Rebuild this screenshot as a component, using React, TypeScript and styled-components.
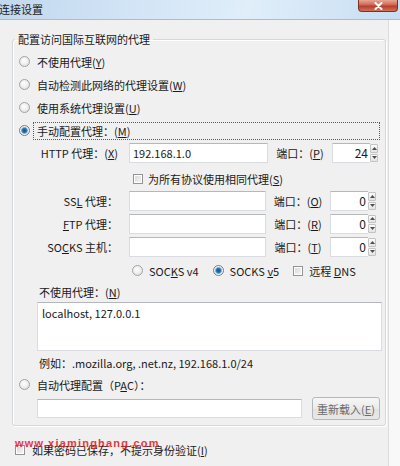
import React from "react";
import styled, { createGlobalStyle, css } from "styled-components";

const GlobalStyle = createGlobalStyle`
  html, body { margin: 0; padding: 0; background: #f0f0f0; }
  body {
    font-family: "Noto Sans CJK SC", "Noto Sans", sans-serif;
    font-size: 11px;
    color: #1a1a1a;
  }
  * { box-sizing: border-box; }
`;

const Window = styled.div`
  width: 400px;
  height: 466px;
  display: flex;
  flex-direction: column;
  overflow: hidden;
  background: #f0f0f0;
`;

const TitleBar = styled.div`
  height: 20px;
  flex: none;
  display: flex;
  align-items: flex-start;
  justify-content: space-between;
  background: linear-gradient(100deg, #c2d8ee 0%, #d3e5f6 35%, #e0eefa 62%, #c8ddf2 100%);
  border-bottom: 1px solid #aabdd0;
`;

const Title = styled.div`
  font-size: 11px;
  line-height: 19px;
  margin-left: -1px;
  color: #1b1b1b;
`;

const CloseButton = styled.div`
  width: 40px;
  height: 12px;
  margin-right: 2px;
  border: 1px solid #7a3226;
  border-top: none;
  border-radius: 0 0 4px 4px;
  background: linear-gradient(#e8a596, #cf6652 45%, #b63e2a 55%, #d0735a);
  display: flex;
  align-items: center;
  justify-content: center;
`;

const Body = styled.div`
  flex: 1;
  display: flex;
`;

const Content = styled.div`
  width: 388px;
  padding: 12px 0 0 12px;
  display: flex;
  flex-direction: column;
`;

const Frame = styled.div`
  flex: 1;
  background: #f8f8f8;
  border-left: 1px solid #dcdcdc;
`;

const Group = styled.fieldset`
  margin: 0;
  padding: 0 0 5px 6px;
  width: 374px;
  min-width: 0;
  border: 1px solid #d2d8dc;
  border-radius: 3px;
  box-shadow: 1px 1px 0 #ffffff, inset 1px 1px 0 #ffffff;
  display: flex;
  flex-direction: column;
`;

const Legend = styled.legend`
  padding: 0 3px;
  margin-left: -4px;
  line-height: 14px;
  font-size: 11px;
`;

const U = styled.span`
  text-decoration: underline;
  text-underline-offset: 1px;
`;

const Row = styled.div<{ $h: number; $indent?: number; $gap?: number; $pt?: number }>`
  display: flex;
  align-items: center;
  height: ${(p) => p.$h}px;
  padding-left: ${(p) => p.$indent ?? 0}px;
  padding-top: ${(p) => p.$pt ?? 0}px;
  gap: ${(p) => p.$gap ?? 0}px;
  white-space: nowrap;
`;

const OptionList = styled.div`
  padding-top: 4px;
  display: flex;
  flex-direction: column;
`;

const Radio = styled.span<{ $checked?: boolean }>`
  flex: none;
  width: 11px;
  height: 11px;
  border-radius: 50%;
  border: 1px solid #a3a3a3;
  background: radial-gradient(circle at 45% 40%, #ffffff 0%, #ececec 55%, #d2d2d2 100%);
  ${(p) =>
    p.$checked &&
    css`
      border-color: #6f7f8c;
      background: radial-gradient(circle at 50% 50%, #1a4f78 0, #2c7bb4 2.2px, #86bde6 3.2px, #f4f7f9 3.8px, #dcdcdc 100%);
    `}
`;

const OptionText = styled.span<{ $focused?: boolean }>`
  padding-left: 4px;
  line-height: 16px;
  ${(p) =>
    p.$focused &&
    css`
      flex: 1;
      margin-right: 5px;
      padding-left: 3px;
      border: 1px dotted #5a5a5a;
      line-height: 16px;
    `}
`;

const FieldLabel = styled.span`
  width: 99px;
  text-align: right;
  flex: none;
`;

const Input = styled.div<{ $w: number; $h?: number }>`
  flex: none;
  width: ${(p) => p.$w}px;
  height: ${(p) => p.$h ?? 20}px;
  background: #ffffff;
  border: 1px solid #d9dde1;
  border-top-color: #b4b8bd;
  padding: 0 3px;
  display: flex;
  align-items: center;
  line-height: 14px;
`;

const TextArea = styled(Input)`
  align-items: flex-start;
  padding: 3px 4px;
  margin-left: 18px;
`;

const PortLabel = styled.span`
  width: 64px;
  flex: none;
  text-align: center;
`;

const PortWrap = styled.div`
  display: flex;
  align-items: center;
  height: 20px;
`;

const PortBox = styled.div`
  width: 38px;
  height: 20px;
  background: #ffffff;
  border: 1px solid #d9dde1;
  border-top-color: #b4b8bd;
  border-right: none;
  text-align: right;
  padding-right: 2px;
  line-height: 18px;
  font-size: 12px;
`;

const Spinner = styled.div`
  width: 8px;
  height: 18px;
  display: flex;
  flex-direction: column;
  gap: 1px;
`;

const SpinBtn = styled.div`
  flex: 1;
  border: 1px solid #c3c3c3;
  border-radius: 1px;
  background: linear-gradient(#fbfbfb, #e3e3e3);
  display: flex;
  align-items: center;
  justify-content: center;
`;

const Check = styled.span`
  flex: none;
  width: 10px;
  height: 10px;
  border: 1px solid #949494;
  background: linear-gradient(135deg, #d6d6d6, #f8f8f8);
  box-shadow: inset 0 0 0 1px #ffffff;
`;

const Choice = styled.span<{ $gap: number }>`
  display: flex;
  align-items: center;
  gap: ${(p) => p.$gap}px;
`;

const Button = styled.div`
  width: 68px;
  height: 23px;
  flex: none;
  border: 1px solid #b5b8bb;
  border-radius: 3px;
  background: linear-gradient(#f6f6f6, #ebebeb 50%, #e2e2e2 51%, #e8e8e8);
  color: #6a6a6a;
  display: flex;
  align-items: center;
  justify-content: center;
  line-height: 14px;
`;

const BottomRow = styled.div`
  position: relative;
  display: flex;
  align-items: center;
  height: 20px;
  margin-top: 14px;
  padding-left: 3px;
  gap: 7px;
`;

const Watermark = styled.span`
  position: absolute;
  left: 3px;
  top: -3px;
  font-family: "Liberation Sans", Arial, sans-serif;
  font-weight: bold;
  font-size: 11px;
  letter-spacing: 1.2px;
  color: #e3262b;
  opacity: 0.9;
  pointer-events: none;
`;

const Tri = ({ up }: { up?: boolean }) => (
  <svg width="5" height="3" viewBox="0 0 5 3">
    <path d={up ? "M0 3 L2.5 0 L5 3 Z" : "M0 0 L2.5 3 L5 0 Z"} fill="#4d4d4d" />
  </svg>
);

const Port = ({ value }: { value: string }) => (
  <PortWrap>
    <PortBox>{value}</PortBox>
    <Spinner>
      <SpinBtn>
        <Tri up />
      </SpinBtn>
      <SpinBtn>
        <Tri />
      </SpinBtn>
    </Spinner>
  </PortWrap>
);

const ProxyRow = ({
  label,
  value,
  portKey,
  port,
  w,
  h,
}: {
  label: React.ReactNode;
  value?: string;
  portKey: string;
  port: string;
  w: number;
  h: number;
}) => (
  <Row $h={h}>
    <FieldLabel>{label}</FieldLabel>
    <Input $w={w} style={{ marginLeft: 11 }}>
      {value}
    </Input>
    <PortLabel>
      端口：(<U>{portKey}</U>)
    </PortLabel>
    <Port value={port} />
  </Row>
);

export default function App() {
  return (
    <>
      <GlobalStyle />
      <Window>
        <TitleBar>
          <Title>连接设置</Title>
          <CloseButton>
            <svg width="9" height="8" viewBox="0 0 9 8">
              <path d="M1.5 1 L7.5 7 M7.5 1 L1.5 7" stroke="#ffffff" strokeWidth="2" strokeLinecap="round" />
            </svg>
          </CloseButton>
        </TitleBar>
        <Body>
          <Content>
            <Group>
              <Legend>配置访问国际互联网的代理</Legend>
              <OptionList>
                <Row $h={23} $gap={3}>
                  <Radio />
                  <OptionText>
                    不使用代理(<U>Y</U>)
                  </OptionText>
                </Row>
                <Row $h={23} $gap={3}>
                  <Radio />
                  <OptionText>
                    自动检测此网络的代理设置(<U>W</U>)
                  </OptionText>
                </Row>
                <Row $h={23} $gap={3}>
                  <Radio />
                  <OptionText>
                    使用系统代理设置(<U>U</U>)
                  </OptionText>
                </Row>
                <Row $h={23} $gap={3}>
                  <Radio $checked />
                  <OptionText $focused>
                    手动配置代理：(<U>M</U>)
                  </OptionText>
                </Row>
              </OptionList>
              <ProxyRow
                h={22}
                w={139}
                label={
                  <>
                    HTTP 代理：(<U>X</U>)
                  </>
                }
                value="192.168.1.0"
                portKey="P"
                port="24"
              />
              <Row $h={26} $pt={3} $indent={114} $gap={5}>
                <Check />
                <span>
                  为所有协议使用相同代理(<U>S</U>)
                </span>
              </Row>
              <ProxyRow
                h={22}
                w={137}
                label={
                  <>
                    SS<U>L</U> 代理：
                  </>
                }
                portKey="O"
                port="0"
              />
              <ProxyRow
                h={23}
                w={137}
                label={
                  <>
                    <U>F</U>TP 代理：
                  </>
                }
                portKey="R"
                port="0"
              />
              <ProxyRow
                h={24}
                w={137}
                label={
                  <>
                    SO<U>C</U>KS 主机：
                  </>
                }
                portKey="T"
                port="0"
              />
              <Row $h={23} $indent={113} $gap={14}>
                <Choice $gap={6}>
                  <Radio />
                  <span>
                    SOC<U>K</U>S v4
                  </span>
                </Choice>
                <Choice $gap={6}>
                  <Radio $checked />
                  <span>
                    SOCKS <U>v</U>5
                  </span>
                </Choice>
                <Choice $gap={6}>
                  <Check />
                  <span>
                    远程 <U>D</U>NS
                  </span>
                </Choice>
              </Row>
              <Row $h={20} $indent={20}>
                不使用代理：(<U>N</U>)
              </Row>
              <TextArea $w={345} $h={49}>
                localhost, 127.0.0.1
              </TextArea>
              <Row $h={24} $indent={20}>
                例如：.mozilla.org, .net.nz, 192.168.1.0/24
              </Row>
              <Row $h={19} $gap={3}>
                <Radio />
                <OptionText>
                  自动代理配置（P<U>A</U>C）：
                </OptionText>
              </Row>
              <Row $h={23} $indent={18} $gap={10} style={{ marginTop: 3 }}>
                <Input $w={265} $h={19} />
                <Button>
                  重新载入(<U>E</U>)
                </Button>
              </Row>
            </Group>
            <BottomRow>
              <Check />
              <span>
                如果密码已保存，不提示身份验证(<U>I</U>)
              </span>
              <Watermark>www.xiaminghang.com</Watermark>
            </BottomRow>
          </Content>
          <Frame />
        </Body>
      </Window>
    </>
  );
}
